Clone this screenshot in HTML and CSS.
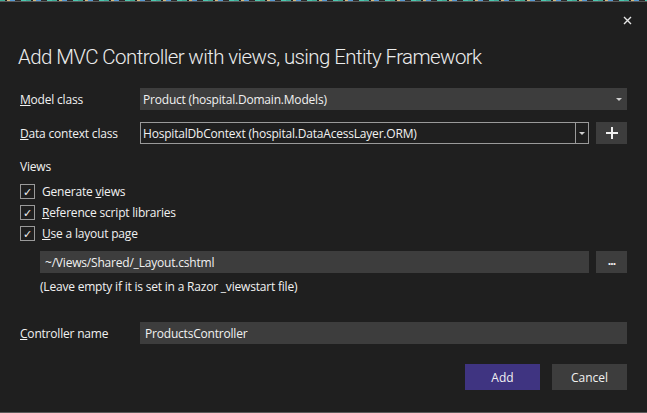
FILE: index.html
```html
<!DOCTYPE html>
<html lang="en">
<head>
    <meta charset="UTF-8">
    <title>Add MVC Controller</title>
    <link rel="stylesheet" href="styles.css">
</head>
<body>
    <div class="code-strip"></div>

    <div class="dialog">
        <div class="close-row">
            <svg class="close" width="9" height="9" viewBox="0 0 9 9">
                <path d="M1 1 L8 8 M8 1 L1 8" stroke="#e6e6e6" stroke-width="1.4"/>
            </svg>
        </div>

        <h1 class="title">Add MVC Controller with views, using Entity Framework</h1>

        <div class="field">
            <label><u>M</u>odel class</label>
            <div class="select">
                <span>Product (hospital.Domain.Models)</span>
                <span class="caret"></span>
            </div>
        </div>

        <div class="field">
            <label><u>D</u>ata context class</label>
            <div class="combo">
                <span class="combo-text">HospitalDbContext (hospital.DataAcessLayer.ORM)</span>
                <span class="combo-btn"><span class="caret"></span></span>
            </div>
            <button class="square-btn plus">
                <svg width="12" height="12" viewBox="0 0 12 12">
                    <path d="M6 0 V12 M0 6 H12" stroke="#f0f0f0" stroke-width="2"/>
                </svg>
            </button>
        </div>

        <div class="section">Views</div>

        <div class="checks">
            <div class="check"><span class="box">&#10003;</span><span>Generate <u>v</u>iews</span></div>
            <div class="check"><span class="box">&#10003;</span><span><u>R</u>eference script libraries</span></div>
            <div class="check"><span class="box">&#10003;</span><span><u>U</u>se a layout page</span></div>
        </div>

        <div class="layout-row">
            <div class="input">~/Views/Shared/_Layout.cshtml</div>
            <button class="square-btn dots">...</button>
        </div>
        <div class="hint">(Leave empty if it is set in a Razor _viewstart file)</div>

        <div class="field controller">
            <label><u>C</u>ontroller name</label>
            <div class="input">ProductsController</div>
        </div>

        <div class="actions">
            <button class="btn primary">Add</button>
            <button class="btn">Cancel</button>
        </div>
    </div>

    <div class="bottom-line"></div>
</body>
</html>
```

FILE: styles.css
```css
body {
    font-family: "Open Sans", "Noto Sans", sans-serif;
    font-size: 12px;
    letter-spacing: -0.2px;
    background-color: #1f1f1f;
    color: #f1f1f1;
    margin: 0;
    padding: 0;
    height: 413px;
    display: flex;
    flex-direction: column;
    overflow: hidden;
}

.code-strip {
    height: 1px;
    background: repeating-linear-gradient(90deg, #3fae9a 0 5px, #1f1f1f 5px 7px, #d7ba7d 7px 10px, #569cd6 10px 15px, #2a2a2a 15px 21px, #4ec9b0 21px 26px);
    border-bottom: 1px solid #5a5a5a;
}

.dialog {
    flex: 1;
    padding: 0 20px 0 20px;
    display: flex;
    flex-direction: column;
}

.close-row {
    display: flex;
    justify-content: flex-end;
    padding-top: 14px;
    margin-right: -5px;
    height: 10px;
}

.title {
    font-family: "Roboto Light", Roboto, "Open Sans", sans-serif;
    font-weight: 300;
    font-size: 20.5px;
    letter-spacing: -0.6px;
    color: #ececec;
    margin: 15px 0 0 -2px;
    line-height: 32px;
    height: 32px;
    white-space: nowrap;
}

.field {
    display: flex;
    align-items: center;
    height: 22px;
    margin-top: 15px;
}

.field + .field {
    margin-top: 12px;
}

.field label {
    width: 120px;
    flex-shrink: 0;
}

.select {
    flex: 1;
    height: 22px;
    background-color: #3d3d3d;
    display: flex;
    align-items: center;
    justify-content: space-between;
    padding: 0 5px 0 3px;
}

.caret {
    width: 0;
    height: 0;
    border-left: 3px solid transparent;
    border-right: 3px solid transparent;
    border-top: 3px solid #d0d0d0;
}

.combo {
    flex: 1;
    height: 22px;
    box-sizing: border-box;
    border: 1px solid #9a9a9a;
    display: flex;
    align-items: center;
}

.combo-text {
    flex: 1;
    padding-left: 2px;
}

.combo-btn {
    width: 12px;
    height: 100%;
    border-left: 1px solid #9a9a9a;
    display: flex;
    align-items: center;
    justify-content: center;
}

.square-btn {
    width: 31px;
    height: 22px;
    margin-left: 7px;
    background-color: #3d3d3d;
    border: none;
    padding: 0;
    color: #f1f1f1;
    display: flex;
    align-items: center;
    justify-content: center;
    flex-shrink: 0;
}

.dots {
    font-family: "Open Sans", sans-serif;
    font-size: 12px;
    font-weight: bold;
    letter-spacing: -1px;
    padding-bottom: 4px;
    box-sizing: border-box;
}

.section {
    margin-top: 14px;
    line-height: 17px;
}

.checks {
    margin-top: 9px;
    display: flex;
    flex-direction: column;
    gap: 6px;
}

.check {
    display: flex;
    align-items: center;
    height: 15px;
}

.box {
    width: 13px;
    height: 13px;
    border: 1px solid #9a9a9a;
    margin-right: 7px;
    font-size: 11px;
    line-height: 13px;
    text-align: center;
    color: #f1f1f1;
}

.layout-row {
    display: flex;
    margin: 10px 0 0 20px;
    height: 22px;
}

.input {
    flex: 1;
    height: 22px;
    background-color: #3d3d3d;
    display: flex;
    align-items: center;
    padding-left: 5px;
}

.hint {
    margin: 5px 0 0 20px;
    line-height: 17px;
}

.controller {
    margin-top: 27px;
}

.actions {
    display: flex;
    justify-content: flex-end;
    gap: 12px;
    margin-top: 20px;
}

.btn {
    width: 75px;
    height: 26px;
    border: none;
    background-color: #3d3d3d;
    color: #f1f1f1;
    font-family: "Open Sans", "Noto Sans", sans-serif;
    font-size: 12px;
    padding: 0;
}

.btn.primary {
    background-color: #3f3481;
}

.bottom-line {
    height: 1px;
    background-color: #5a5a5a;
}
```
